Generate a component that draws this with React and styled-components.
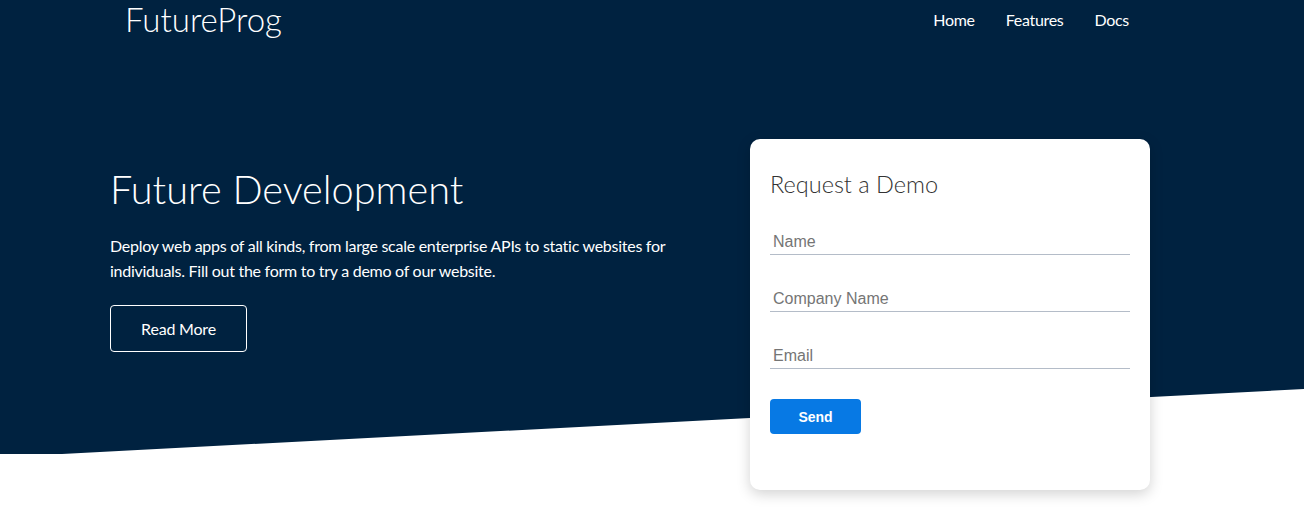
import React from "react";
import styled, { createGlobalStyle } from "styled-components";

const GlobalStyle = createGlobalStyle`
  * { box-sizing: border-box; }
  body {
    margin: 0;
    background: #fff;
    font-family: Lato, "Open Sans", sans-serif;
  }
`;

const Page = styled.div`
  position: relative;
  padding-bottom: 40px;

  &::before {
    content: "";
    position: absolute;
    top: 0;
    left: 0;
    right: 0;
    height: 454px;
    background: #002240;
    clip-path: polygon(0 0, 100% 0, 100% 389px, 62px 100%, 0 100%);
    z-index: 0;
  }
`;

const Navbar = styled.nav`
  position: relative;
  z-index: 1;
  display: flex;
  justify-content: space-between;
  align-items: center;
  height: 38px;
  margin-bottom: 1px;
  padding: 0 175px 0 125px;
`;

const Logo = styled.h1`
  margin: 0;
  font-size: 33px;
  font-weight: 300;
  color: #fff;
  line-height: 38px;
`;

const NavLinks = styled.ul`
  display: flex;
  gap: 31px;
  list-style: none;
  margin: 0;
  padding: 0;
`;

const NavLink = styled.a`
  color: #fff;
  font-size: 16px;
  font-weight: 400;
  letter-spacing: -0.3px;
  text-decoration: none;
`;

const Showcase = styled.section`
  position: relative;
  z-index: 1;
  display: grid;
  grid-template-columns: 1fr 400px;
  align-items: start;
  padding: 100px 154px 0 110px;
`;

const TextWrapper = styled.div`
  color: #fff;
  padding-top: 26px;
`;

const Heading = styled.h2`
  margin: 0 0 20px;
  font-size: 39.7px;
  font-weight: 300;
  line-height: 1.2;
`;

const Lead = styled.p`
  max-width: 580px;
  margin: 0 0 22px;
  font-size: 16px;
  font-weight: 400;
  letter-spacing: -0.27px;
  line-height: 25px;
`;

const OutlineButton = styled.a`
  display: inline-block;
  width: 137px;
  padding: 13px 0;
  border: 1px solid #fff;
  border-radius: 4px;
  color: #fff;
  font-size: 16px;
  font-weight: 400;
  letter-spacing: -0.2px;
  line-height: 19px;
  text-align: center;
  text-decoration: none;
`;

const Card = styled.div`
  background: #fff;
  border-radius: 10px;
  box-shadow: 0 4px 14px rgba(0, 0, 0, 0.18);
  padding: 30px 20px 56px;
`;

const CardTitle = styled.h3`
  margin: 0 0 30px;
  font-size: 23.5px;
  font-weight: 300;
  color: #333;
  line-height: 30px;
`;

const Form = styled.form`
  display: flex;
  flex-direction: column;
  gap: 31px;
`;

const Input = styled.input`
  width: 100%;
  height: 26px;
  padding: 0 3px;
  border: none;
  border-bottom: 1px solid #b4bcc8;
  outline: none;
  font-family: Arial, "Liberation Sans", sans-serif;
  font-size: 16px;
  color: #333;

  &::placeholder {
    color: #757575;
  }
`;

const SubmitButton = styled.button`
  width: 91px;
  height: 35px;
  margin-top: -1px;
  border: none;
  border-radius: 4px;
  background: #0779e4;
  color: #fff;
  font-family: Arial, "Liberation Sans", sans-serif;
  font-size: 14px;
  font-weight: 700;
`;

const App = () => {
  return (
    <>
      <GlobalStyle />
      <Page>
        <Navbar>
          <Logo>FutureProg</Logo>
          <NavLinks>
            <li><NavLink href="#">Home</NavLink></li>
            <li><NavLink href="#">Features</NavLink></li>
            <li><NavLink href="#">Docs</NavLink></li>
          </NavLinks>
        </Navbar>
        <Showcase>
          <TextWrapper>
            <Heading>Future Development</Heading>
            <Lead>
              Deploy web apps of all kinds, from large scale enterprise APIs to static websites for
              individuals. Fill out the form to try a demo of our website.
            </Lead>
            <OutlineButton href="#">Read More</OutlineButton>
          </TextWrapper>
          <Card>
            <CardTitle>Request a Demo</CardTitle>
            <Form onSubmit={(e) => e.preventDefault()}>
              <Input type="text" placeholder="Name" />
              <Input type="text" placeholder="Company Name" />
              <Input type="email" placeholder="Email" />
              <div>
                <SubmitButton type="submit">Send</SubmitButton>
              </div>
            </Form>
          </Card>
        </Showcase>
      </Page>
    </>
  );
};

export default App;
